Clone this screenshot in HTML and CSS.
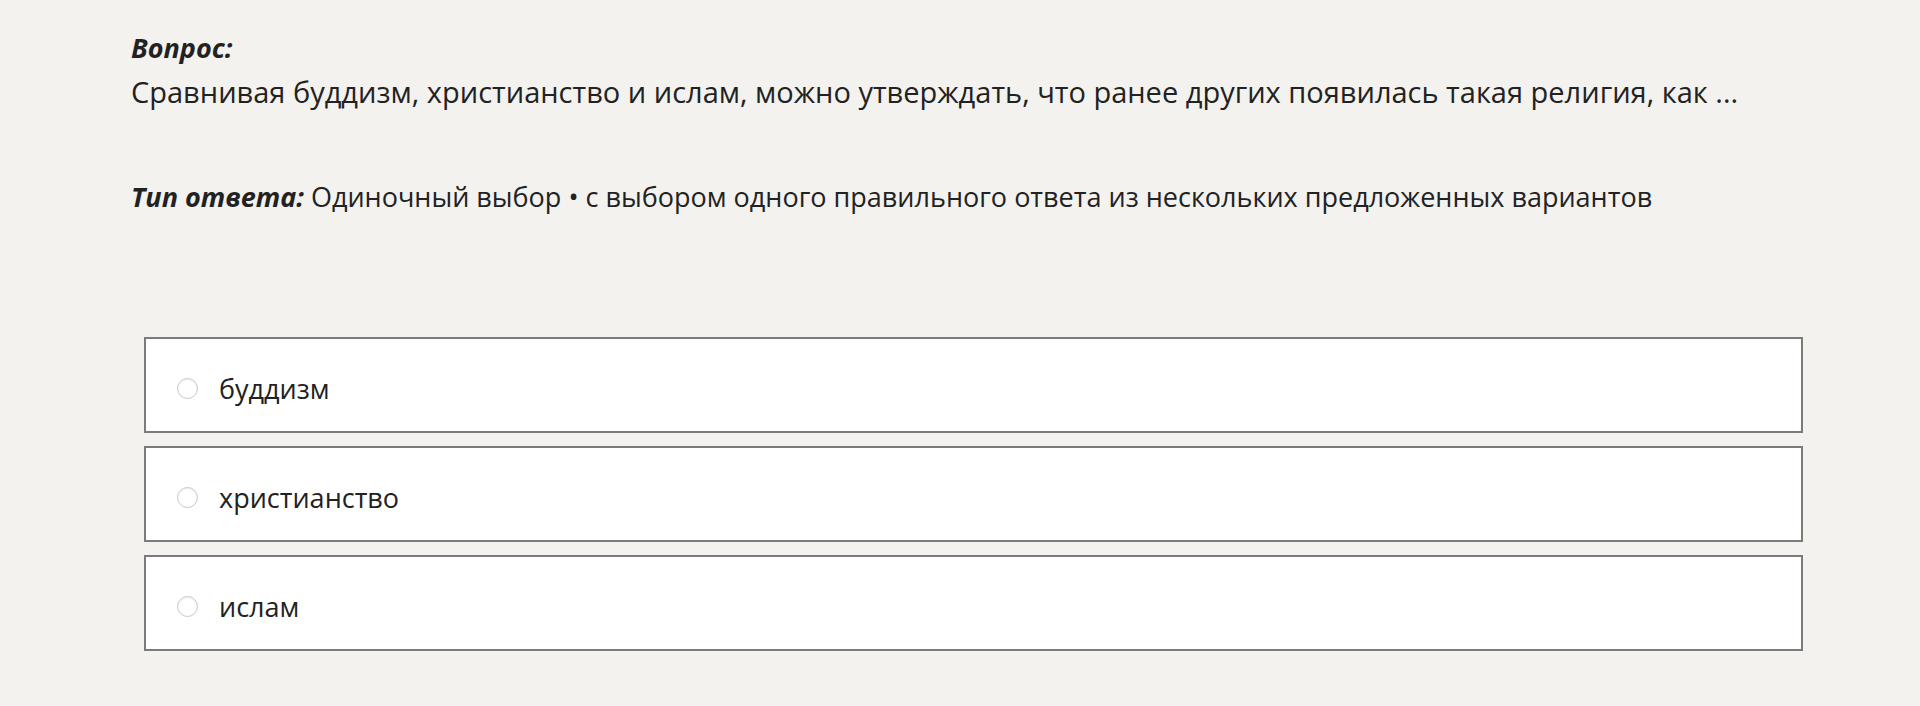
FILE: index.html
```html
<!DOCTYPE html>
<html>
<head>
  <title>Вопрос</title>
  <link rel="stylesheet" href="styles.css">
</head>
<body>
  <div class="quiz">
    <div class="question">
      <div class="label">Вопрос:</div>
      <div class="text">Сравнивая буддизм, христианство и ислам, можно утверждать, что ранее других появилась такая религия, как ...</div>
    </div>
    <div class="type"><span class="label">Тип ответа:</span> Одиночный выбор • с выбором одного правильного ответа из нескольких предложенных вариантов</div>

    <div class="options">
      <label class="option"><span class="radio"></span>буддизм</label>
      <label class="option"><span class="radio"></span>христианство</label>
      <label class="option"><span class="radio"></span>ислам</label>
    </div>
  </div>
</body>
</html>
```

FILE: styles.css
```css
body { margin: 0; background: #f3f2ef; color: #222; font-family: "Open Sans", "Noto Sans", sans-serif; }
.quiz { padding: 28px 0 0 131px; }
.question { font-size: 27px; line-height: 40px; }
.question .text { font-size: 29px; margin-top: 4px; }
.label { font-weight: bold; font-style: italic; }
.type { font-size: 27px; line-height: 40px; margin-top: 65px; }
.options { margin: 120px 0 0 13px; width: 1659px; display: flex; flex-direction: column; gap: 13px; }
.option { display: flex; align-items: center; height: 96px; box-sizing: border-box; background: #fff; border: 2px solid #7b7b7b; padding: 6px 0 0 31px; font-size: 27px; }
.radio { width: 19px; height: 19px; border-radius: 50%; border: 1px solid #c8c8c8; box-shadow: inset 0 1px 2px rgba(0,0,0,0.08); margin-right: 21px; }
```
